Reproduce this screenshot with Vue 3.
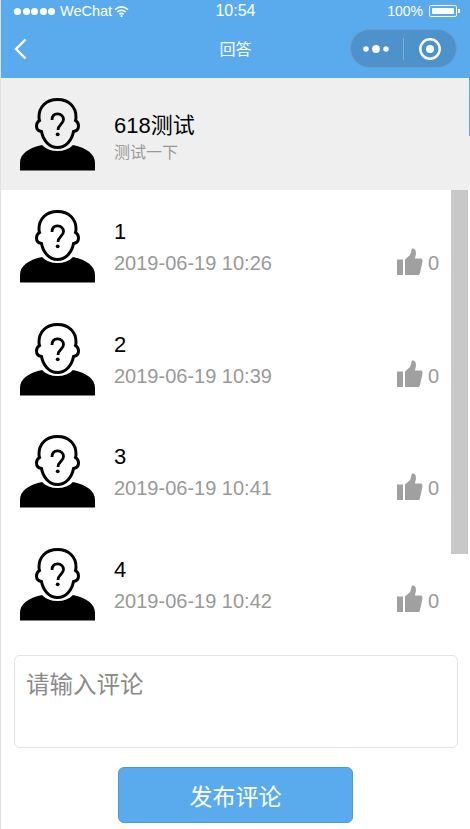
<template>
  <div class="page">
    <div class="statusbar">
      <div class="status-left">
        <span class="signal">
          <i v-for="n in 5" :key="n" class="signal-dot"></i>
        </span>
        <span class="carrier">WeChat</span>
        <svg class="wifi" width="15" height="11" viewBox="0 0 15 11">
          <path d="M1 3.600C5 .3 10 .3 14 3.600M3.200 6C5.800 3.900 9.200 3.900 11.800 6M5.300 8.200C6.600 7.200 8.400 7.200 9.700 8.200" fill="none" stroke="#fff" stroke-width="1.600" />
          <circle cx="7.500" cy="10" r="1.100" fill="#fff" />
        </svg>
      </div>
      <div class="time">10:54</div>
      <div class="status-right">
        <span>100%</span>
        <span class="battery"><i></i></span>
        <span class="battery-tip"></span>
      </div>
    </div>

    <div class="navbar">
      <svg class="back" width="13" height="22" viewBox="0 0 13 22">
        <path d="M11.500 1.500L2 11l9.500 9.500" fill="none" stroke="#fff" stroke-width="2.400" />
      </svg>
      <div class="nav-title">回答</div>
      <div class="capsule">
        <svg width="26" height="12" viewBox="0 0 26 12">
          <circle cx="3" cy="6" r="2.700" fill="#fff" />
          <circle cx="13" cy="6" r="3.900" fill="#fff" />
          <circle cx="23" cy="6" r="2.700" fill="#fff" />
        </svg>
        <span class="capsule-line"></span>
        <svg width="24" height="24" viewBox="0 0 24 24">
          <circle cx="12" cy="12" r="9.700" fill="none" stroke="#fff" stroke-width="2.400" />
          <circle cx="12" cy="12" r="4" fill="#fff" />
        </svg>
      </div>
    </div>

    <div class="question">
      <svg class="avatar" width="75" height="73" viewBox="0 0 75 73">
        <path d="M37.500 1.500C26 1.500 19 9 19 19c0 2 .5 3.500 .5 3.500C17 24 16.500 26 16.500 28c0 3 2 5 5 5.500C23 42 29 49.500 37.500 49.500S52 42 53.500 33.500c3-.5 5-2.500 5-5.500 0-2-.5-4-3-5.500 0 0 .5-1.500 .5-3.500C56 9 49 1.500 37.500 1.500Z" fill="none" stroke="#000" stroke-width="3" />
        <path d="M32 22c0-4 2-6.200 5.500-6.200s6 2.700 6 5.700c0 4.500-5.500 5-5.500 10.500" fill="none" stroke="#000" stroke-width="2.800" />
        <circle cx="37.700" cy="36.300" r="1.900" fill="#000" />
        <path d="M0 72.500V65c0-9 8-15 22-18 4 4 9 6 15.500 6S49 51 53 47c14 3 22 9 22 18v7.500Z" fill="#000" />
      </svg>
      <div class="body question-body">
        <div class="question-title">618测试</div>
        <div class="question-sub">测试一下</div>
      </div>
      <span class="edge-mark"></span>
    </div>

    <div class="list">
      <div class="row" v-for="item in answers" :key="item.name">
        <svg class="avatar" width="75" height="73" viewBox="0 0 75 73">
          <path d="M37.500 1.500C26 1.500 19 9 19 19c0 2 .5 3.500 .5 3.500C17 24 16.500 26 16.500 28c0 3 2 5 5 5.500C23 42 29 49.500 37.500 49.500S52 42 53.500 33.500c3-.5 5-2.500 5-5.500 0-2-.5-4-3-5.500 0 0 .5-1.500 .5-3.500C56 9 49 1.500 37.500 1.500Z" fill="none" stroke="#000" stroke-width="3" />
          <path d="M32 22c0-4 2-6.200 5.500-6.200s6 2.700 6 5.700c0 4.500-5.500 5-5.500 10.500" fill="none" stroke="#000" stroke-width="2.800" />
          <circle cx="37.700" cy="36.300" r="1.900" fill="#000" />
          <path d="M0 72.500V65c0-9 8-15 22-18 4 4 9 6 15.500 6S49 51 53 47c14 3 22 9 22 18v7.500Z" fill="#000" />
        </svg>
        <div class="body row-body">
          <div class="name">{{ item.name }}</div>
          <div class="date">{{ item.date }}</div>
        </div>
        <div class="like">
          <svg class="thumb" width="26" height="27" viewBox="0 0 26 27">
            <path d="M0 11.500h6V27H0ZM8 11.500L13 7c1-2 1.500-5 2-6.500 2.500-.5 4 1.500 4 4.500 0 2-1 4-1 5.500h6c1.500 0 1.800 2 1.300 4L23 25c-.2 1.500-1 2-2 2H8Z" fill="#a0a0a0" />
          </svg>
          <span class="like-count">{{ item.likes }}</span>
        </div>
      </div>
      <div class="scrollbar"></div>
    </div>

    <textarea class="comment" placeholder="请输入评论"></textarea>
    <button class="submit">发布评论</button>
  </div>
</template>

<script setup>
const answers = [
  { name: '1', date: '2019-06-19 10:26', likes: 0 },
  { name: '2', date: '2019-06-19 10:39', likes: 0 },
  { name: '3', date: '2019-06-19 10:41', likes: 0 },
  { name: '4', date: '2019-06-19 10:42', likes: 0 }
]
</script>

<style>
html,
body {
  margin: 0;
  background: #fff;
}
</style>

<style scoped>
.page {
  width: 470px;
  height: 829px;
  box-sizing: border-box;
  border-left: 1px solid #e0e0e0;
  overflow: hidden;
  font-family: "Liberation Sans", "Noto Sans CJK SC", sans-serif;
  background: #fff;
}

.statusbar {
  height: 22px;
  padding: 0 13px;
  background: #5aabee;
  color: #fff;
  display: grid;
  grid-template-columns: 1fr auto 1fr;
  align-items: center;
}
.status-left {
  display: flex;
  align-items: center;
}
.signal {
  display: flex;
  gap: 1.500px;
  margin-right: 5px;
}
.signal-dot {
  width: 7px;
  height: 7px;
  border-radius: 50%;
  background: #fff;
}
.carrier {
  font-size: 14.500px;
}
.wifi {
  margin-left: 2px;
}
.time {
  font-size: 16px;
}
.status-right {
  display: flex;
  align-items: center;
  justify-content: flex-end;
  margin-right: -3px;
  font-size: 14px;
}
.battery {
  width: 28px;
  height: 12px;
  box-sizing: border-box;
  margin-left: 6px;
  padding: 2px;
  border: 1px solid #fff;
  border-radius: 2px;
  display: flex;
}
.battery i {
  flex: 1;
  background: #fff;
  border-radius: 1px;
}
.battery-tip {
  width: 2px;
  height: 4px;
  margin-left: 1px;
  background: #fff;
}

.navbar {
  height: 56px;
  padding: 0 13px;
  background: #5aabee;
  display: grid;
  grid-template-columns: 1fr auto 1fr;
  align-items: center;
}
.back {
  margin-top: -3px;
}
.nav-title {
  color: #fff;
  font-size: 16px;
  margin-top: -4px;
}
.capsule {
  justify-self: end;
  box-sizing: border-box;
  width: 107px;
  height: 39px;
  margin-top: -3px;
  border: 1px solid #6a9fcc;
  border-radius: 20px;
  background: #4e92cb;
  display: flex;
  align-items: center;
  padding-left: 12px;
}
.capsule-line {
  width: 1px;
  height: 22px;
  margin: 0 14px;
  background: #7fb0da;
}

.question {
  position: relative;
  height: 112px;
  background: #efefef;
  padding-left: 19px;
  display: flex;
  align-items: center;
}
.edge-mark {
  position: absolute;
  top: 0;
  right: 0;
  width: 1px;
  height: 58px;
  background: #5aabee;
}
.avatar {
  flex: none;
}
.body {
  margin-left: 19px;
  flex: 1;
}
.question-body {
  padding-top: 7px;
}
.row-body {
  padding-top: 3px;
}
.question-title {
  font-size: 22px;
  line-height: 30px;
  color: #000;
}
.question-sub {
  font-size: 16px;
  line-height: 24px;
  color: #999;
}

.list {
  position: relative;
  height: 450px;
  overflow: hidden;
}
.row {
  height: 112.500px;
  padding: 1px 31px 0 19px;
  box-sizing: border-box;
  display: flex;
  align-items: center;
}
.name {
  font-size: 22px;
  line-height: 30px;
  color: #000;
}
.date {
  font-size: 20px;
  line-height: 32px;
  color: #999;
}
.like {
  align-self: flex-end;
  margin-bottom: 23px;
  display: flex;
  align-items: center;
  color: #999;
}
.thumb {
  margin-bottom: 5px;
}
.like-count {
  margin-left: 5px;
  font-size: 20px;
}
.scrollbar {
  position: absolute;
  top: 0;
  left: 450px;
  width: 17px;
  height: 364px;
  background: #c8c8c8;
}

.comment {
  display: block;
  box-sizing: border-box;
  width: 444px;
  height: 93px;
  margin: 15px 0 0 13px;
  padding: 11px 11px;
  border: 1px solid #e3e3e3;
  border-radius: 6px;
  resize: none;
  outline: none;
  font-family: inherit;
  font-size: 23.500px;
  line-height: 36px;
}
.comment::placeholder {
  color: #8a8a8a;
}

.submit {
  display: block;
  box-sizing: border-box;
  width: 235px;
  height: 56px;
  margin: 19px 0 0 117px;
  border: 1px solid #4f97d6;
  border-radius: 6px;
  background: #5aabee;
  color: #fff;
  font-family: inherit;
  font-size: 23px;
}
</style>
